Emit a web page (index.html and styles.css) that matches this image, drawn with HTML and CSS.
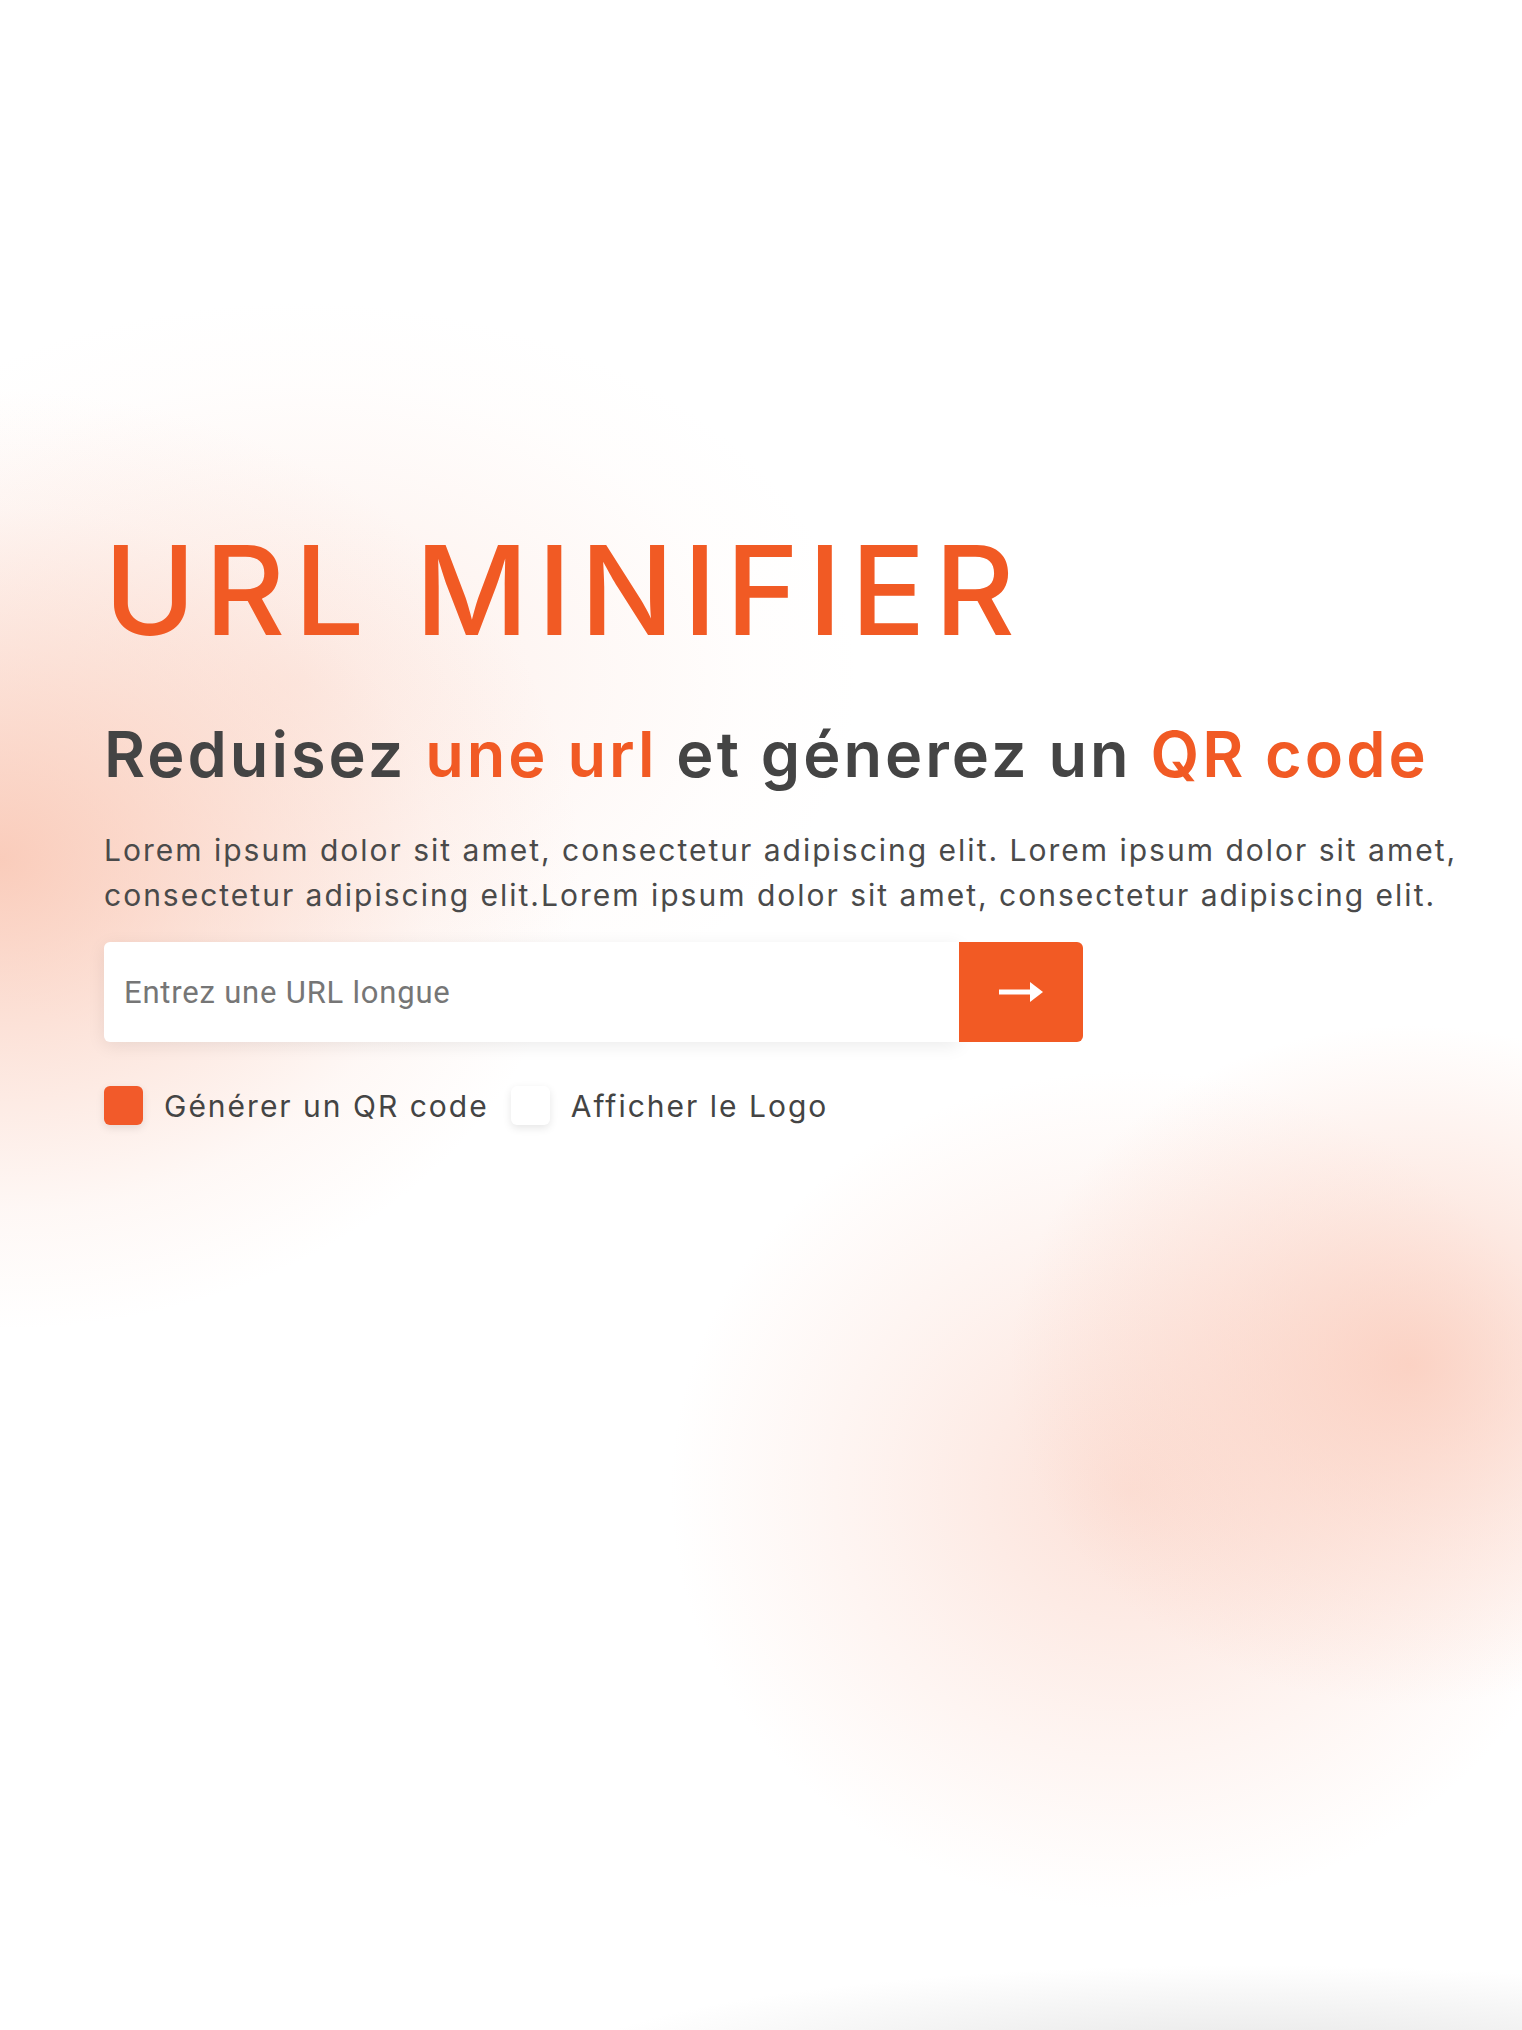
FILE: index.html
```html
<!DOCTYPE html>
<html lang="fr">
<head>
<meta charset="utf-8">
<title>URL Minifier</title>
<link rel="stylesheet" href="styles.css">
</head>
<body>
<div class="page">
  <main class="hero">
    <h1 class="title">URL MINIFIER</h1>
    <h2 class="subtitle">Reduisez <span class="accent">une url</span> et génerez un <span class="accent">QR code</span></h2>
    <p class="desc">Lorem ipsum dolor sit amet, consectetur adipiscing elit. Lorem ipsum dolor sit amet,<br>consectetur adipiscing elit.Lorem ipsum dolor sit amet, consectetur adipiscing elit.</p>
    <form class="shorten">
      <input class="url-input" type="text" placeholder="Entrez une URL longue">
      <button class="go" type="button" aria-label="Valider">
        <svg width="44" height="22" viewBox="0 0 44 22"><path d="M0 11H33" stroke="#fff" stroke-width="5" fill="none"/><path d="M31 1L44 11L31 21Z" fill="#fff"/></svg>
      </button>
    </form>
    <div class="options">
      <label class="opt"><span class="box checked"></span><span class="opt-label">Générer un QR code</span></label>
      <label class="opt"><span class="box"></span><span class="opt-label">Afficher le Logo</span></label>
    </div>
  </main>
</div>
</body>
</html>
```
FILE: styles.css
```css
html, body {
  margin: 0;
  padding: 0;
}
body {
  font-family: Inter, "Noto Sans", sans-serif;
  color: #444;
  background: #fff;
}
.page {
  min-height: 2030px;
  box-sizing: border-box;
  overflow: hidden;
  background:
    radial-gradient(ellipse 400px 340px at 1410px 1365px, rgba(250, 198, 180, 0.75) 0%, rgba(250, 198, 180, 0.35) 50%, rgba(250, 198, 180, 0) 100%),
    radial-gradient(ellipse 460px 420px at 1130px 1490px, rgba(250, 205, 190, 0.6) 0%, rgba(250, 205, 190, 0.25) 55%, rgba(250, 205, 190, 0) 100%),
    radial-gradient(ellipse 580px 470px at 0px 860px, rgba(249, 196, 176, 0.85) 0%, rgba(249, 196, 176, 0.4) 45%, rgba(249, 196, 176, 0.12) 75%, rgba(249, 196, 176, 0) 100%),
    radial-gradient(ellipse 560px 380px at 300px 680px, rgba(250, 212, 198, 0.4) 0%, rgba(250, 212, 198, 0.15) 55%, rgba(250, 212, 198, 0.04) 80%, rgba(250, 212, 198, 0) 100%),
    radial-gradient(ellipse 700px 110px at 1250px 2075px, rgba(200, 200, 200, 0.55), rgba(200, 200, 200, 0) 100%),
    #fff;
}
.hero {
  padding: 520px 0 0 104px;
}
.title {
  margin: 0;
  font-size: 124px;
  line-height: 140px;
  font-weight: 500;
  color: #f15a24;
  letter-spacing: 9px;
}
.subtitle {
  margin: 54px 0 0;
  font-size: 63px;
  line-height: 80px;
  font-weight: 600;
  color: #444;
  letter-spacing: 3px;
}
.accent {
  color: #f15a24;
}
.desc {
  margin: 34px 0 0;
  font-size: 30px;
  line-height: 45px;
  font-weight: 400;
  color: #4a4a4a;
  letter-spacing: 2px;
}
.shorten {
  display: flex;
  margin-top: 24px;
  width: 979px;
  height: 100px;
}
.url-input {
  flex: 1;
  border: none;
  outline: none;
  border-radius: 6px 0 0 6px;
  padding: 0 20px;
  font-family: Roboto, "Liberation Sans", sans-serif;
  font-size: 31px;
  letter-spacing: 0.8px;
  color: #333;
  background: #fff;
  box-shadow: 0 4px 18px rgba(0, 0, 0, 0.08);
}
.url-input::placeholder {
  color: #767676;
}
.go {
  width: 124px;
  border: none;
  border-radius: 0 6px 6px 0;
  background: #f25a24;
  display: flex;
  align-items: center;
  justify-content: center;
  padding: 0;
}
.options {
  display: flex;
  gap: 22px;
  margin-top: 44px;
  align-items: center;
}
.opt {
  display: flex;
  align-items: center;
  gap: 21px;
}
.box {
  width: 39px;
  height: 39px;
  border-radius: 6px;
  background: #fff;
  box-shadow: 0 3px 8px rgba(0, 0, 0, 0.1);
}
.box.checked {
  background: #f25a2a;
}
.opt-label {
  font-size: 30px;
  color: #444;
  letter-spacing: 2px;
}
```
